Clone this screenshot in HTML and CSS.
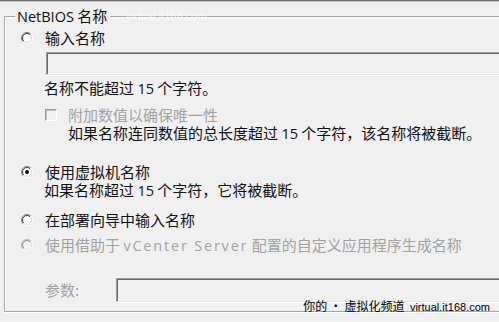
FILE: index.html
```html
<!DOCTYPE html>
<html lang="zh-CN">
<head>
<meta charset="utf-8">
<title>NetBIOS 名称</title>
<link rel="stylesheet" href="styles.css">
</head>
<body>
<div class="topbar"></div>
<div class="group">
  <div class="legend"><span class="lat">NetBIOS</span> 名称<span class="wm-top">— virtual.it168.com</span></div>

  <div class="opt row1">
    <svg class="radio" width="12" height="12" viewBox="0 0 12 12">
      <defs>
        <linearGradient id="rgOuter" x1="0" y1="0" x2="1" y2="1">
          <stop offset="0.5" stop-color="#7c7c7c"/>
          <stop offset="0.5" stop-color="#ffffff"/>
        </linearGradient>
        <linearGradient id="rgInner" x1="0" y1="0" x2="1" y2="1">
          <stop offset="0.5" stop-color="#3c3c3c"/>
          <stop offset="0.5" stop-color="#d6d6d6"/>
        </linearGradient>
        <linearGradient id="rgOuterD" x1="0" y1="0" x2="1" y2="1">
          <stop offset="0.5" stop-color="#adadad"/>
          <stop offset="0.5" stop-color="#ffffff"/>
        </linearGradient>
        <linearGradient id="rgInnerD" x1="0" y1="0" x2="1" y2="1">
          <stop offset="0.5" stop-color="#8e8e8e"/>
          <stop offset="0.5" stop-color="#e4e4e4"/>
        </linearGradient>
      </defs>
      <circle cx="6" cy="6" r="5.5" fill="none" stroke="url(#rgOuter)"/>
      <circle cx="6" cy="6" r="4.5" fill="#ffffff" stroke="url(#rgInner)"/>
    </svg>
    <span class="label">输入名称</span>
  </div>

  <div class="textbox name-box"></div>

  <div class="note ind1 first-note">名称不能超过 <span class="lat">15</span> 个字符。</div>

  <div class="check-row">
    <span class="checkbox"></span>
    <span class="label disabled">附加数值以确保唯一性</span>
  </div>
  <div class="note ind2">如果名称连同数值的总长度超过 <span class="lat">15</span> 个字符，该名称将被截断。</div>

  <div class="opt row2">
    <svg class="radio" width="12" height="12" viewBox="0 0 12 12">
      <circle cx="6" cy="6" r="5.5" fill="none" stroke="url(#rgOuter)"/>
      <circle cx="6" cy="6" r="4.5" fill="#ffffff" stroke="url(#rgInner)"/>
      <circle cx="6" cy="6" r="2" fill="#111111"/>
    </svg>
    <span class="label">使用虚拟机名称</span>
  </div>
  <div class="note ind1">如果名称超过 <span class="lat">15</span> 个字符，它将被截断。</div>

  <div class="opt row3">
    <svg class="radio" width="12" height="12" viewBox="0 0 12 12">
      <circle cx="6" cy="6" r="5.5" fill="none" stroke="url(#rgOuter)"/>
      <circle cx="6" cy="6" r="4.5" fill="#ffffff" stroke="url(#rgInner)"/>
    </svg>
    <span class="label">在部署向导中输入名称</span>
  </div>

  <div class="opt row4">
    <svg class="radio" width="12" height="12" viewBox="0 0 12 12">
      <circle cx="6" cy="6" r="5.5" fill="none" stroke="url(#rgOuterD)"/>
      <circle cx="6" cy="6" r="4.5" fill="#f4f4f4" stroke="url(#rgInnerD)"/>
    </svg>
    <span class="label disabled">使用借助于 <span class="lat wide">vCenter Server</span> 配置的自定义应用程序生成名称</span>
  </div>

  <div class="param-row">
    <span class="param-label disabled">参数:</span>
    <div class="textbox param-box"></div>
  </div>
</div>
<div class="wm-bottom">你的 • 虚拟化频道&nbsp; <span class="wm-lat">virtual.it168.com</span></div>
</body>
</html>
```

FILE: styles.css
```css
html, body {
  margin: 0;
  padding: 0;
}
body {
  width: 499px;
  height: 322px;
  overflow: hidden;
  background: #f0f0f0;
  color: #111111;
  font-family: "Noto Sans CJK SC", sans-serif;
  font-size: 15px;
  line-height: 18px;
  position: relative;
}
.lat {
  font-family: "Open Sans", "Noto Sans CJK SC", sans-serif;
  font-size: 14.5px;
}
.wide {
  letter-spacing: 1.8px;
}
.topbar {
  height: 1px;
  background: #6e6e6e;
  border-bottom: 1px solid #c9c9c9;
}
.group {
  margin: 14px -30px 0 4px;
  padding: 0 0 9px 15px;
  border: 1px solid #a6a6a6;
  box-shadow: inset 1px 1px 0 #ffffff, 1px 1px 0 #ffffff;
  display: flex;
  flex-direction: column;
  align-items: flex-start;
}
.legend {
  margin: -10px 0 4px -5px;
  padding: 0 3px 0 2px;
  background: #f0f0f0;
  height: 18px;
  line-height: 18px;
  position: relative;
  white-space: nowrap;
}
.wm-top {
  position: absolute;
  left: calc(100% + 2px);
  top: 0;
  font-family: "Liberation Sans", sans-serif;
  font-size: 11px;
  color: rgba(255, 255, 255, 0.8);
  white-space: nowrap;
}
.opt {
  display: flex;
  align-items: center;
  height: 18px;
  white-space: nowrap;
}
.radio {
  flex: none;
  margin: 0 12px 0 1px;
}
.label {
  white-space: nowrap;
}
.disabled {
  color: #a2a2a2;
}
.row2 { margin-top: 21px; }
.row3 { margin-top: 12px; }
.row4 { margin-top: 7px; }
.textbox {
  box-sizing: border-box;
  height: 23px;
  border: 1px solid;
  border-color: #9a9a9a #e4e4e4 #e4e4e4 #9a9a9a;
  box-shadow: inset 1px 1px 0 #6a6a6a, 0 1px 0 #ffffff;
  background: #f0f0f0;
}
.name-box {
  margin: 5px 0 0 26px;
  align-self: stretch;
}
.note {
  white-space: nowrap;
  height: 18px;
}
.ind1 { margin-left: 24px; }
.ind2 { margin-left: 48px; }
.first-note { margin-top: 4px; }
.check-row {
  margin: 9px 0 0 25px;
  display: flex;
  align-items: center;
  height: 18px;
}
.checkbox {
  box-sizing: border-box;
  width: 12px;
  height: 12px;
  margin-right: 11px;
  border: 1px solid;
  border-color: #999999 #ffffff #ffffff #999999;
  box-shadow: inset 1px 1px 0 #c4c4c4;
  background: #f2f2f2;
}
.param-row {
  margin: 24px 0 0 25px;
  display: flex;
  align-items: center;
  align-self: stretch;
  height: 24px;
}
.param-label {
  width: 71px;
  flex: none;
}
.param-box {
  flex: 1;
  height: 24px;
}
.wm-bottom {
  position: absolute;
  right: 9px;
  top: 300px;
  font-family: "Noto Sans CJK SC", sans-serif;
  font-size: 12px;
  line-height: 12px;
  color: #000000;
  white-space: nowrap;
}
.wm-lat {
  font-family: "Liberation Sans", sans-serif;
  font-size: 11px;
}
```
